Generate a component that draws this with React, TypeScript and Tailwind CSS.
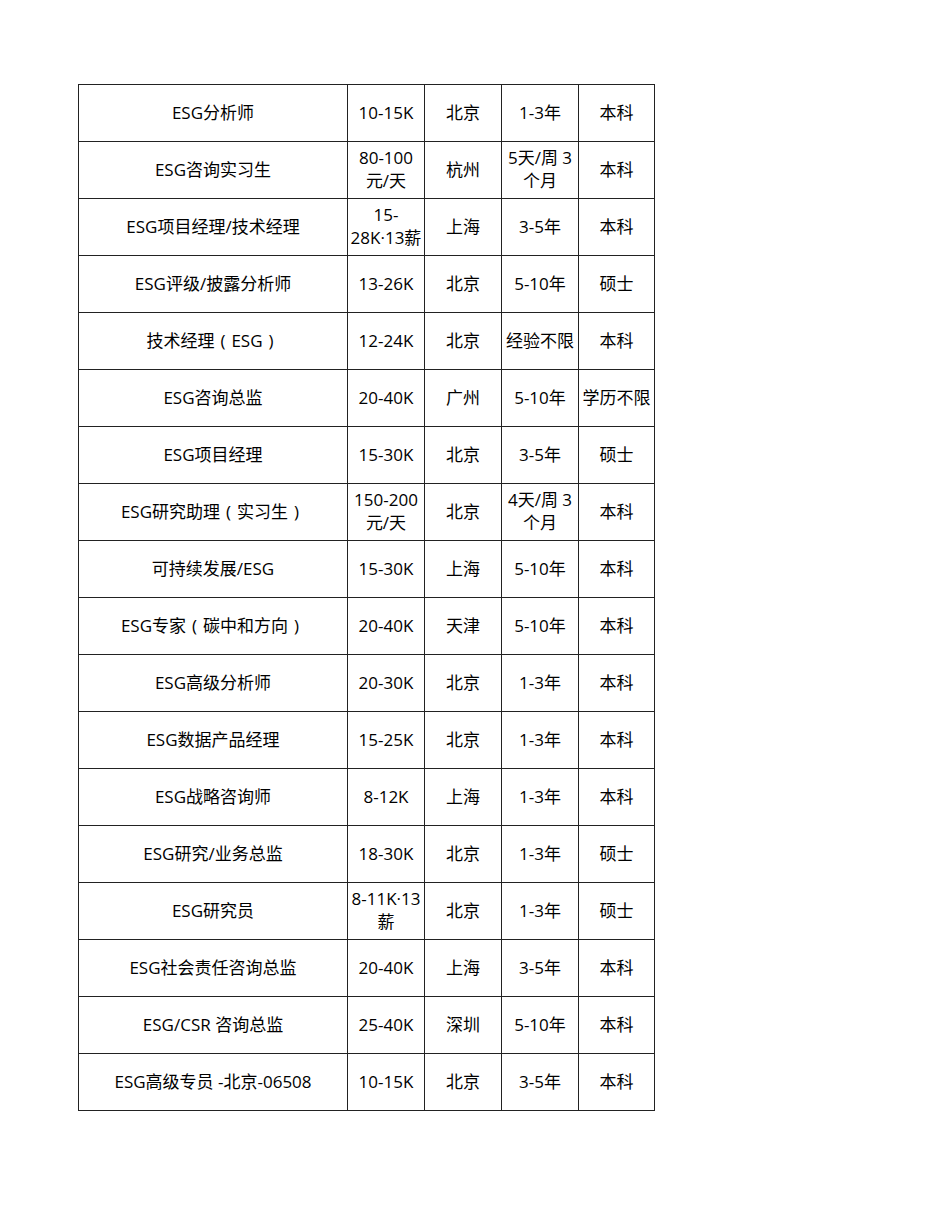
const rows: string[][] = [
  ['ESG分析师', '10-15K', '北京', '1-3年', '本科'],
  ['ESG咨询实习生', '80-100\n元/天', '杭州', '5天/周 3\n个月', '本科'],
  ['ESG项目经理/技术经理', '15-\n28K·13薪', '上海', '3-5年', '本科'],
  ['ESG评级/披露分析师', '13-26K', '北京', '5-10年', '硕士'],
  ['技术经理（ESG）', '12-24K', '北京', '经验不限', '本科'],
  ['ESG咨询总监', '20-40K', '广州', '5-10年', '学历不限'],
  ['ESG项目经理', '15-30K', '北京', '3-5年', '硕士'],
  ['ESG研究助理（实习生）', '150-200\n元/天', '北京', '4天/周 3\n个月', '本科'],
  ['可持续发展/ESG', '15-30K', '上海', '5-10年', '本科'],
  ['ESG专家（碳中和方向）', '20-40K', '天津', '5-10年', '本科'],
  ['ESG高级分析师', '20-30K', '北京', '1-3年', '本科'],
  ['ESG数据产品经理', '15-25K', '北京', '1-3年', '本科'],
  ['ESG战略咨询师', '8-12K', '上海', '1-3年', '本科'],
  ['ESG研究/业务总监', '18-30K', '北京', '1-3年', '硕士'],
  ['ESG研究员', '8-11K·13\n薪', '北京', '1-3年', '硕士'],
  ['ESG社会责任咨询总监', '20-40K', '上海', '3-5年', '本科'],
  ['ESG/CSR 咨询总监', '25-40K', '深圳', '5-10年', '本科'],
  ['ESG高级专员 -北京-06508', '10-15K', '北京', '3-5年', '本科'],
];

const widths = ['w-[269px]', 'w-[77px]', 'w-[77px]', 'w-[77px]', 'w-[76px]'];

// full-width brackets drawn centred in their em box
function Line({ text }: { text: string }) {
  const parts = text.split(/([（）])/);
  return (
    <div className="leading-[23px] whitespace-nowrap">
      {parts.map((p, i) =>
        p === '（' || p === '）' ? (
          <span key={i} className="inline-block w-[17px] text-center">
            {p === '（' ? '(' : ')'}
          </span>
        ) : (
          <span key={i}>{p}</span>
        )
      )}
    </div>
  );
}

function Cell({ text, w }: { text: string; w: string }) {
  return (
    <td className={`${w} h-[57px] border border-[#222] p-0 pb-[2px] text-center align-middle`}>
      {text.split('\n').map((l, i) => (
        <Line key={i} text={l} />
      ))}
    </td>
  );
}

export default function App() {
  return (
    <div
      className="min-h-[1230px] w-[950px] bg-white pt-[84px] pl-[78px] text-[17px] text-black"
      style={{ fontFamily: '"Open Sans", "Noto Sans CJK SC", sans-serif' }}
    >
      <table className="table-fixed border-collapse">
        <tbody>
          {rows.map((r, i) => (
            <tr key={i}>
              {r.map((c, j) => (
                <Cell key={j} text={c} w={widths[j]} />
              ))}
            </tr>
          ))}
        </tbody>
      </table>
    </div>
  );
}
